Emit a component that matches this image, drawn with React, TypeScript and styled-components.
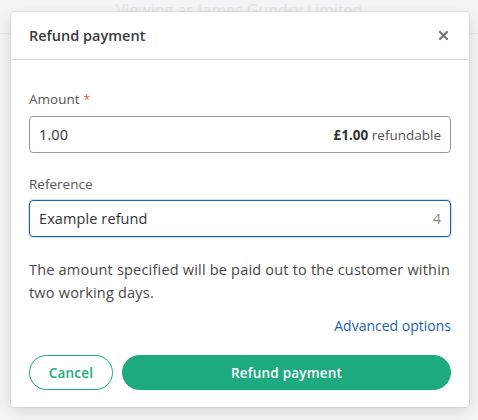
import React from "react";
import styled, { createGlobalStyle } from "styled-components";

const Global = createGlobalStyle`
  html, body { margin: 0; padding: 0; }
  body {
    width: 478px;
    height: 420px;
    overflow: hidden;
    background: #f4f4f4;
    font-family: "Open Sans", "Noto Sans", sans-serif;
    -webkit-font-smoothing: antialiased;
  }
`;

const Page = styled.div`
  position: relative;
  width: 478px;
  height: 420px;
  background: #f4f4f4;
`;

const PageBar = styled.div`
  height: 34px;
  border-bottom: 1px solid #e6e6e6;
  display: flex;
  justify-content: center;
  align-items: flex-start;
  box-sizing: border-box;
`;

const Viewing = styled.div`
  font-size: 16px;
  line-height: 22px;
  margin-top: -1px;
  color: #e3e6ec;
`;

const Overlay = styled.div`
  position: absolute;
  left: 11px;
  top: 12px;
  width: 458px;
`;

const Modal = styled.div`
  background: #fff;
  border-radius: 4px;
  box-shadow: 0 0 0 1px rgba(0, 0, 0, 0.06), 0 4px 14px rgba(0, 0, 0, 0.12);
  color: #333;
`;

const Header = styled.div`
  height: 48px;
  box-sizing: border-box;
  border-bottom: 1px solid #dcdcdc;
  display: flex;
  align-items: center;
  justify-content: space-between;
  padding: 0 19px 0 18px;
`;

const Title = styled.div`
  font-size: 14.5px;
  font-weight: 600;
  color: #3a3a3a;
`;

const Close = styled.button`
  border: 0;
  background: none;
  padding: 0;
  width: 14px;
  height: 14px;
  display: flex;
  align-items: center;
  justify-content: center;
  cursor: pointer;
`;

const Body = styled.div`
  padding: 29px 18px 17px 18px;
  display: flex;
  flex-direction: column;
`;

const Field = styled.div<{ $gap?: number }>`
  display: flex;
  flex-direction: column;
  margin-bottom: ${(p) => p.$gap ?? 0}px;
`;

const Label = styled.label`
  font-size: 13.5px;
  line-height: 20px;
  color: #555;
  margin-bottom: 6px;
`;

const Req = styled.span`
  color: #e0544a;
  margin-left: 4px;
  font-size: 12px;
`;

const InputBox = styled.div<{ $focused?: boolean }>`
  height: 37px;
  box-sizing: border-box;
  border-radius: 4px;
  border: 1px solid ${(p) => (p.$focused ? "#1c5fb8" : "#9a9a9a")};
  box-shadow: ${(p) => (p.$focused ? "0 0 0 1px rgba(28,95,184,0.18)" : "none")};
  display: flex;
  align-items: center;
  justify-content: space-between;
  padding: 0 9px 0 9px;
`;

const Value = styled.span`
  font-size: 14.5px;
  letter-spacing: 0.1px;
  color: #333;
`;

const Suffix = styled.span`
  font-size: 13.5px;
  color: #555;
  b {
    color: #333;
    font-weight: 700;
  }
`;

const Counter = styled.span`
  font-size: 14.5px;
  color: #888;
`;

const Note = styled.p`
  margin: 0 0 12px 0;
  font-size: 14.5px;
  letter-spacing: 0.2px;
  line-height: 23px;
  color: #484848;
`;

const LinkRow = styled.div`
  display: flex;
  justify-content: flex-end;
  margin-bottom: 19px;
`;

const Link = styled.a`
  font-size: 14px;
  line-height: 20px;
  color: #1c5fb8;
  text-decoration: none;
`;

const Actions = styled.div`
  display: flex;
  gap: 9px;
`;

const Btn = styled.button<{ $primary?: boolean }>`
  height: 35px;
  border-radius: 18px;
  font-family: inherit;
  font-size: 13.5px;
  font-weight: 600;
  letter-spacing: 0.2px;
  border: 1px solid #1daa7e;
  background: ${(p) => (p.$primary ? "#1daa7e" : "#fff")};
  color: ${(p) => (p.$primary ? "#fff" : "#1daa7e")};
  flex: ${(p) => (p.$primary ? "1" : "0 0 84px")};
  cursor: pointer;
`;

export default function App() {
  return (
    <>
      <Global />
      <Page>
        <PageBar>
          <Viewing>Viewing as James Gundry Limited</Viewing>
        </PageBar>
        <Overlay>
          <Modal role="dialog">
            <Header>
              <Title>Refund payment</Title>
              <Close aria-label="Close">
                <svg width="11" height="11" viewBox="0 0 11 11">
                  <path d="M2 2 L9 9 M9 2 L2 9" stroke="#777" strokeWidth="2.2" strokeLinecap="round" />
                </svg>
              </Close>
            </Header>
            <Body>
              <Field $gap={21}>
                <Label>
                  Amount<Req>*</Req>
                </Label>
                <InputBox>
                  <Value>1.00</Value>
                  <Suffix>
                    <b>£1.00</b> refundable
                  </Suffix>
                </InputBox>
              </Field>
              <Field $gap={21}>
                <Label>Reference</Label>
                <InputBox $focused>
                  <Value>Example refund</Value>
                  <Counter>4</Counter>
                </InputBox>
              </Field>
              <Note>The amount specified will be paid out to the customer within two working days.</Note>
              <LinkRow>
                <Link href="#">Advanced options</Link>
              </LinkRow>
              <Actions>
                <Btn>Cancel</Btn>
                <Btn $primary>Refund payment</Btn>
              </Actions>
            </Body>
          </Modal>
        </Overlay>
      </Page>
    </>
  );
}
